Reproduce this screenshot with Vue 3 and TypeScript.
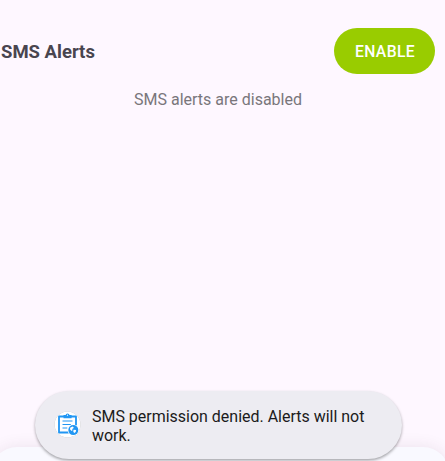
<script setup lang="ts">
const title = 'SMS Alerts'
const status = 'SMS alerts are disabled'
const toastMessage = 'SMS permission denied. Alerts will not work.'
</script>

<template>
  <main class="screen">
    <header class="header">
      <h1 class="title">{{ title }}</h1>
      <button class="enable" type="button">ENABLE</button>
    </header>
    <p class="status">{{ status }}</p>
    <div class="sheet"></div>
    <div class="toast" role="status">
      <svg class="icon" viewBox="0 0 27 27" aria-hidden="true">
        <circle cx="13.5" cy="13.5" r="13" fill="#fff" />
        <g fill="none" stroke="#2196f3">
          <path d="M14.8 21.5H5V5.5h17v9" stroke-width="1.8" stroke-linejoin="round" />
          <path d="M8.5 10h10M8.5 13.5h8.3M8.5 17h4.8" stroke-width="1.2" />
        </g>
        <path d="M9.5 4h2.1a2 2 0 0 1 3.9 0h2.1v3.2H9.5z" fill="#2196f3" />
        <circle cx="13.5" cy="4.2" r=".6" fill="#fff" />
        <circle cx="19.3" cy="19.1" r="5.7" fill="#fff" />
        <circle cx="19.3" cy="19.1" r="5" fill="#2196f3" />
        <path d="M16.1 16.7l2.4-1.2 1.2.7-.5 1.3-1.2.5.7 1-1.1 1-1.5-1.4zM19.5 18.8l2.6.3-.4 2-1.5.9-.9-1.2z" fill="#fff" />
      </svg>
      <span class="message">{{ toastMessage }}</span>
    </div>
  </main>
</template>

<style>
body {
  margin: 0;
  background: #fef7ff;
}
</style>

<style scoped>
.screen {
  position: relative;
  box-sizing: border-box;
  height: 461px;
  padding: 28px 10px 0 1px;
  overflow: hidden;
  background: #fef7ff;
  font-family: Roboto, sans-serif;
}
.header {
  display: flex;
  align-items: center;
  justify-content: space-between;
}
.title {
  margin: 0;
  padding-top: 2px;
  color: #49454f;
  font-size: 18.5px;
  line-height: 22px;
  font-weight: 700;
}
.enable {
  width: 101px;
  height: 46px;
  padding: 1px 0 0 1px;
  border: 0;
  border-radius: 23px;
  background: #99cc00;
  color: #fff;
  font: 500 15.7px/20px Roboto, sans-serif;
  letter-spacing: 0.4px;
}
.status {
  margin: 16px 0 0;
  color: #79767b;
  font-size: 16px;
  line-height: 20px;
  text-align: center;
}
.sheet {
  position: absolute;
  top: 447px;
  left: -9px;
  width: 458px;
  height: 40px;
  border-radius: 26px 26px 0 0;
  background: #f9f9ff;
  box-shadow: 0 0 16px rgba(70, 40, 70, 0.1);
}
.toast {
  position: absolute;
  top: 390.5px;
  left: 34.5px;
  display: flex;
  align-items: center;
  gap: 11.5px;
  box-sizing: border-box;
  width: 367px;
  height: 68px;
  padding: 0 28px 0 19px;
  border-radius: 34px;
  background: #edecf2;
  box-shadow: 0 1.5px 3px rgba(0, 0, 0, 0.35);
}
.icon {
  flex: none;
  width: 27px;
  height: 27px;
  overflow: visible;
  filter: drop-shadow(0 0.8px 0.6px rgba(0, 0, 0, 0.28));
}
.message {
  padding-top: 2px;
  color: #1b1b20;
  font-size: 15.98px;
  line-height: 19px;
}
</style>
